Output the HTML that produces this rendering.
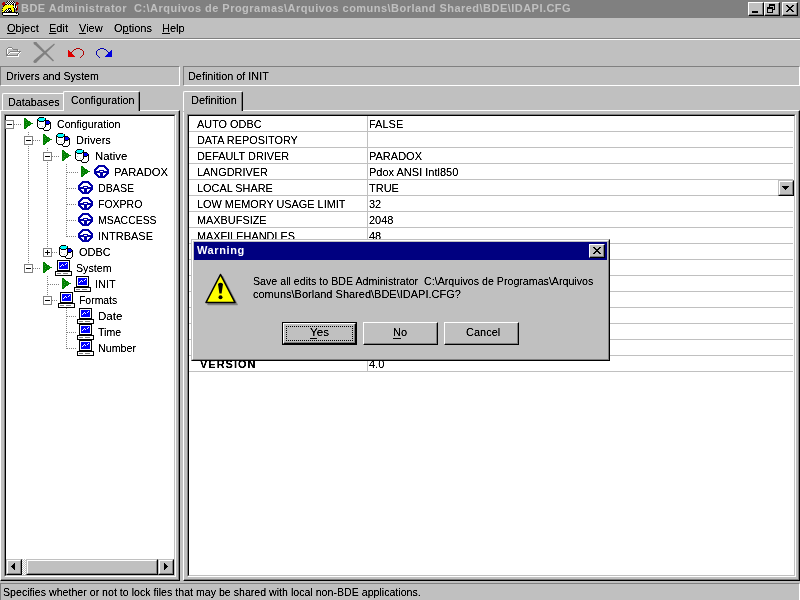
<!DOCTYPE html>
<html><head><meta charset="utf-8">
<style>
*{margin:0;padding:0;box-sizing:border-box}
html,body{width:800px;height:600px;overflow:hidden;background:#c0c0c0;font-family:"Liberation Sans",sans-serif;font-size:11px;color:#000}
.a{position:absolute}
.t{position:absolute;white-space:nowrap;line-height:13px;transform-origin:0 0;filter:url(#crisp)}
.u{text-decoration:underline;text-underline-offset:1px}
.u2{text-decoration:underline;text-underline-offset:2px}
.dl{position:absolute;background-image:linear-gradient(90deg,#808080 50%,transparent 50%);background-size:2px 1px;height:1px}
.dv{position:absolute;background-image:linear-gradient(180deg,#808080 50%,transparent 50%);background-size:1px 2px;width:1px}
</style></head><body>
<div id="root" class="a" style="left:0;top:0;width:800px;height:600px;background:#c0c0c0;will-change:transform;overflow:hidden">
<svg width="0" height="0" style="position:absolute"><defs><filter id="crisp"><feComponentTransfer><feFuncA type="linear" slope="1.8" intercept="-0.25"/></feComponentTransfer></filter><g id="i_db"><rect x="3" y="1" width="5" height="1" fill="#000"/><rect x="2" y="2" width="1" height="1" fill="#000"/><rect x="3" y="2" width="6" height="1" fill="#00ffff"/><rect x="9" y="2" width="1" height="1" fill="#000"/><rect x="1" y="3" width="1" height="1" fill="#000"/><rect x="2" y="3" width="7" height="1" fill="#00ffff"/><rect x="9" y="3" width="1" height="1" fill="#000"/><rect x="1" y="4" width="2" height="1" fill="#000"/><rect x="3" y="4" width="5" height="1" fill="#00ffff"/><rect x="8" y="4" width="5" height="1" fill="#000"/><rect x="1" y="5" width="1" height="1" fill="#000"/><rect x="2" y="5" width="1" height="1" fill="#fff"/><rect x="3" y="5" width="5" height="1" fill="#000"/><rect x="8" y="5" width="1" height="1" fill="#fff"/><rect x="9" y="5" width="1" height="1" fill="#000"/><rect x="10" y="5" width="3" height="1" fill="#0000ff"/><rect x="13" y="5" width="1" height="1" fill="#000"/><rect x="1" y="6" width="1" height="1" fill="#000"/><rect x="2" y="6" width="7" height="1" fill="#fff"/><rect x="9" y="6" width="1" height="1" fill="#000"/><rect x="10" y="6" width="4" height="1" fill="#0000ff"/><rect x="14" y="6" width="1" height="1" fill="#000"/><rect x="1" y="7" width="1" height="1" fill="#000"/><rect x="2" y="7" width="7" height="1" fill="#fff"/><rect x="9" y="7" width="1" height="1" fill="#000"/><rect x="10" y="7" width="3" height="1" fill="#0000ff"/><rect x="13" y="7" width="2" height="1" fill="#000"/><rect x="1" y="8" width="1" height="1" fill="#000"/><rect x="2" y="8" width="1" height="1" fill="#fff"/><rect x="3" y="8" width="1" height="1" fill="#c0c0c0"/><rect x="4" y="8" width="5" height="1" fill="#fff"/><rect x="9" y="8" width="4" height="1" fill="#000"/><rect x="13" y="8" width="1" height="1" fill="#fff"/><rect x="14" y="8" width="1" height="1" fill="#000"/><rect x="1" y="9" width="1" height="1" fill="#000"/><rect x="2" y="9" width="7" height="1" fill="#fff"/><rect x="9" y="9" width="1" height="1" fill="#000"/><rect x="10" y="9" width="4" height="1" fill="#fff"/><rect x="14" y="9" width="1" height="1" fill="#000"/><rect x="1" y="10" width="1" height="1" fill="#000"/><rect x="2" y="10" width="4" height="1" fill="#fff"/><rect x="6" y="10" width="1" height="1" fill="#c0c0c0"/><rect x="7" y="10" width="2" height="1" fill="#fff"/><rect x="9" y="10" width="1" height="1" fill="#000"/><rect x="10" y="10" width="4" height="1" fill="#fff"/><rect x="14" y="10" width="1" height="1" fill="#000"/><rect x="2" y="11" width="1" height="1" fill="#000"/><rect x="3" y="11" width="5" height="1" fill="#fff"/><rect x="8" y="11" width="1" height="1" fill="#000"/><rect x="9" y="11" width="5" height="1" fill="#fff"/><rect x="14" y="11" width="1" height="1" fill="#000"/><rect x="3" y="12" width="5" height="1" fill="#000"/><rect x="8" y="12" width="6" height="1" fill="#fff"/><rect x="14" y="12" width="1" height="1" fill="#000"/><rect x="7" y="13" width="1" height="1" fill="#000"/><rect x="8" y="13" width="5" height="1" fill="#fff"/><rect x="13" y="13" width="1" height="1" fill="#000"/><rect x="8" y="14" width="5" height="1" fill="#000"/></g><g id="i_wheel"><rect x="5" y="1" width="7" height="1" fill="#0000a8"/><rect x="4" y="2" width="9" height="1" fill="#0000a8"/><rect x="3" y="3" width="3" height="1" fill="#0000a8"/><rect x="11" y="3" width="3" height="1" fill="#0000a8"/><rect x="2" y="4" width="3" height="1" fill="#0000a8"/><rect x="12" y="4" width="3" height="1" fill="#0000a8"/><rect x="1" y="5" width="3" height="1" fill="#0000a8"/><rect x="13" y="5" width="3" height="1" fill="#0000a8"/><rect x="1" y="6" width="2" height="1" fill="#0000a8"/><rect x="6" y="6" width="5" height="1" fill="#0000a8"/><rect x="14" y="6" width="2" height="1" fill="#0000a8"/><rect x="1" y="7" width="6" height="1" fill="#0000a8"/><rect x="7" y="7" width="3" height="1" fill="#fff"/><rect x="10" y="7" width="6" height="1" fill="#0000a8"/><rect x="1" y="8" width="15" height="1" fill="#0000a8"/><rect x="1" y="9" width="3" height="1" fill="#0000a8"/><rect x="7" y="9" width="3" height="1" fill="#0000a8"/><rect x="13" y="9" width="3" height="1" fill="#0000a8"/><rect x="2" y="10" width="3" height="1" fill="#0000a8"/><rect x="7" y="10" width="3" height="1" fill="#0000a8"/><rect x="12" y="10" width="3" height="1" fill="#0000a8"/><rect x="3" y="11" width="3" height="1" fill="#0000a8"/><rect x="7" y="11" width="3" height="1" fill="#0000a8"/><rect x="11" y="11" width="3" height="1" fill="#0000a8"/><rect x="4" y="12" width="9" height="1" fill="#0000a8"/><rect x="5" y="13" width="7" height="1" fill="#0000a8"/></g><g id="i_comp"><rect x="2" y="0" width="13" height="1" fill="#000"/><rect x="2" y="1" width="1" height="1" fill="#000"/><rect x="3" y="1" width="11" height="1" fill="#fff"/><rect x="14" y="1" width="1" height="1" fill="#000"/><rect x="2" y="2" width="1" height="1" fill="#000"/><rect x="3" y="2" width="1" height="1" fill="#fff"/><rect x="4" y="2" width="9" height="1" fill="#0000ff"/><rect x="13" y="2" width="1" height="1" fill="#fff"/><rect x="14" y="2" width="1" height="1" fill="#000"/><rect x="2" y="3" width="1" height="1" fill="#000"/><rect x="3" y="3" width="1" height="1" fill="#fff"/><rect x="4" y="3" width="7" height="1" fill="#0000ff"/><rect x="11" y="3" width="1" height="1" fill="#fff"/><rect x="12" y="3" width="1" height="1" fill="#0000ff"/><rect x="13" y="3" width="1" height="1" fill="#fff"/><rect x="14" y="3" width="1" height="1" fill="#000"/><rect x="2" y="4" width="1" height="1" fill="#000"/><rect x="3" y="4" width="1" height="1" fill="#fff"/><rect x="4" y="4" width="3" height="1" fill="#0000ff"/><rect x="7" y="4" width="1" height="1" fill="#fff"/><rect x="8" y="4" width="2" height="1" fill="#0000ff"/><rect x="10" y="4" width="1" height="1" fill="#fff"/><rect x="11" y="4" width="2" height="1" fill="#0000ff"/><rect x="13" y="4" width="1" height="1" fill="#fff"/><rect x="14" y="4" width="1" height="1" fill="#000"/><rect x="2" y="5" width="1" height="1" fill="#000"/><rect x="3" y="5" width="1" height="1" fill="#fff"/><rect x="4" y="5" width="2" height="1" fill="#0000ff"/><rect x="6" y="5" width="1" height="1" fill="#fff"/><rect x="7" y="5" width="1" height="1" fill="#0000ff"/><rect x="8" y="5" width="1" height="1" fill="#fff"/><rect x="9" y="5" width="4" height="1" fill="#0000ff"/><rect x="13" y="5" width="1" height="1" fill="#fff"/><rect x="14" y="5" width="1" height="1" fill="#000"/><rect x="2" y="6" width="1" height="1" fill="#000"/><rect x="3" y="6" width="1" height="1" fill="#fff"/><rect x="4" y="6" width="1" height="1" fill="#0000ff"/><rect x="5" y="6" width="1" height="1" fill="#fff"/><rect x="6" y="6" width="7" height="1" fill="#0000ff"/><rect x="13" y="6" width="1" height="1" fill="#fff"/><rect x="14" y="6" width="1" height="1" fill="#000"/><rect x="2" y="7" width="1" height="1" fill="#000"/><rect x="3" y="7" width="1" height="1" fill="#fff"/><rect x="4" y="7" width="9" height="1" fill="#0000ff"/><rect x="13" y="7" width="1" height="1" fill="#fff"/><rect x="14" y="7" width="1" height="1" fill="#000"/><rect x="2" y="8" width="1" height="1" fill="#000"/><rect x="3" y="8" width="1" height="1" fill="#fff"/><rect x="4" y="8" width="9" height="1" fill="#0000ff"/><rect x="13" y="8" width="1" height="1" fill="#fff"/><rect x="14" y="8" width="1" height="1" fill="#000"/><rect x="2" y="9" width="1" height="1" fill="#000"/><rect x="3" y="9" width="11" height="1" fill="#fff"/><rect x="14" y="9" width="1" height="1" fill="#000"/><rect x="2" y="10" width="13" height="1" fill="#000"/><rect x="0" y="11" width="17" height="1" fill="#000"/><rect x="0" y="12" width="1" height="1" fill="#000"/><rect x="1" y="12" width="15" height="1" fill="#fff"/><rect x="16" y="12" width="1" height="1" fill="#000"/><rect x="0" y="13" width="1" height="1" fill="#000"/><rect x="1" y="13" width="1" height="1" fill="#fff"/><rect x="2" y="13" width="4" height="1" fill="#808080"/><rect x="6" y="13" width="2" height="1" fill="#fff"/><rect x="8" y="13" width="5" height="1" fill="#808080"/><rect x="13" y="13" width="3" height="1" fill="#fff"/><rect x="16" y="13" width="1" height="1" fill="#000"/><rect x="0" y="14" width="1" height="1" fill="#000"/><rect x="1" y="14" width="15" height="1" fill="#fff"/><rect x="16" y="14" width="1" height="1" fill="#000"/><rect x="0" y="15" width="17" height="1" fill="#000"/></g><g id="i_tri"><rect x="0" y="0" width="2" height="1" fill="#008000"/><rect x="0" y="1" width="3" height="1" fill="#008000"/><rect x="0" y="2" width="1" height="1" fill="#008000"/><rect x="1" y="2" width="1" height="1" fill="#30a030"/><rect x="2" y="2" width="2" height="1" fill="#008000"/><rect x="0" y="3" width="6" height="1" fill="#008000"/><rect x="0" y="4" width="2" height="1" fill="#008000"/><rect x="2" y="4" width="1" height="1" fill="#30a030"/><rect x="3" y="4" width="4" height="1" fill="#008000"/><rect x="0" y="5" width="5" height="1" fill="#008000"/><rect x="5" y="5" width="1" height="1" fill="#30a030"/><rect x="6" y="5" width="3" height="1" fill="#008000"/><rect x="0" y="6" width="2" height="1" fill="#008000"/><rect x="2" y="6" width="1" height="1" fill="#30a030"/><rect x="3" y="6" width="4" height="1" fill="#008000"/><rect x="0" y="7" width="6" height="1" fill="#008000"/><rect x="0" y="8" width="1" height="1" fill="#008000"/><rect x="1" y="8" width="1" height="1" fill="#30a030"/><rect x="2" y="8" width="2" height="1" fill="#008000"/><rect x="0" y="9" width="3" height="1" fill="#008000"/><rect x="0" y="10" width="2" height="1" fill="#008000"/></g><g id="i_bde"><rect x="6" y="1" width="1" height="1" fill="#000"/><rect x="7" y="1" width="1" height="1" fill="#fff"/><rect x="8" y="1" width="1" height="1" fill="#000"/><rect x="9" y="1" width="1" height="1" fill="#fff"/><rect x="10" y="1" width="1" height="1" fill="#000"/><rect x="11" y="1" width="1" height="1" fill="#fff"/><rect x="12" y="1" width="1" height="1" fill="#000"/><rect x="2" y="2" width="2" height="1" fill="#b00000"/><rect x="5" y="2" width="1" height="1" fill="#000"/><rect x="6" y="2" width="1" height="1" fill="#fff"/><rect x="7" y="2" width="1" height="1" fill="#000"/><rect x="8" y="2" width="1" height="1" fill="#fff"/><rect x="9" y="2" width="1" height="1" fill="#000"/><rect x="10" y="2" width="1" height="1" fill="#fff"/><rect x="11" y="2" width="1" height="1" fill="#000"/><rect x="12" y="2" width="1" height="1" fill="#fff"/><rect x="13" y="2" width="1" height="1" fill="#000"/><rect x="15" y="2" width="2" height="1" fill="#b00000"/><rect x="1" y="3" width="3" height="1" fill="#b00000"/><rect x="5" y="3" width="1" height="1" fill="#fff"/><rect x="6" y="3" width="1" height="1" fill="#000"/><rect x="7" y="3" width="1" height="1" fill="#fff"/><rect x="8" y="3" width="1" height="1" fill="#000"/><rect x="9" y="3" width="1" height="1" fill="#fff"/><rect x="10" y="3" width="1" height="1" fill="#000"/><rect x="11" y="3" width="1" height="1" fill="#fff"/><rect x="12" y="3" width="1" height="1" fill="#000"/><rect x="13" y="3" width="1" height="1" fill="#fff"/><rect x="15" y="3" width="3" height="1" fill="#b00000"/><rect x="1" y="4" width="3" height="1" fill="#b00000"/><rect x="4" y="4" width="2" height="1" fill="#000"/><rect x="6" y="4" width="1" height="1" fill="#fff"/><rect x="7" y="4" width="1" height="1" fill="#000"/><rect x="8" y="4" width="1" height="1" fill="#fff"/><rect x="9" y="4" width="1" height="1" fill="#000"/><rect x="10" y="4" width="1" height="1" fill="#fff"/><rect x="11" y="4" width="2" height="1" fill="#000"/><rect x="13" y="4" width="1" height="1" fill="#fff"/><rect x="14" y="4" width="1" height="1" fill="#000"/><rect x="15" y="4" width="2" height="1" fill="#b00000"/><rect x="2" y="5" width="1" height="1" fill="#b00000"/><rect x="3" y="5" width="1" height="1" fill="#000"/><rect x="4" y="5" width="8" height="1" fill="#ffff00"/><rect x="12" y="5" width="1" height="1" fill="#000"/><rect x="13" y="5" width="1" height="1" fill="#fff"/><rect x="14" y="5" width="1" height="1" fill="#000"/><rect x="2" y="6" width="1" height="1" fill="#000"/><rect x="3" y="6" width="10" height="1" fill="#ffff00"/><rect x="13" y="6" width="1" height="1" fill="#fff"/><rect x="14" y="6" width="1" height="1" fill="#000"/><rect x="15" y="6" width="1" height="1" fill="#fff"/><rect x="16" y="6" width="1" height="1" fill="#b00000"/><rect x="2" y="7" width="10" height="1" fill="#ffff00"/><rect x="12" y="7" width="1" height="1" fill="#000"/><rect x="13" y="7" width="1" height="1" fill="#fff"/><rect x="14" y="7" width="1" height="1" fill="#000"/><rect x="15" y="7" width="1" height="1" fill="#fff"/><rect x="16" y="7" width="1" height="1" fill="#b00000"/><rect x="1" y="8" width="1" height="1" fill="#000"/><rect x="2" y="8" width="5" height="1" fill="#ffff00"/><rect x="7" y="8" width="3" height="1" fill="#000"/><rect x="10" y="8" width="3" height="1" fill="#ffff00"/><rect x="13" y="8" width="1" height="1" fill="#000"/><rect x="14" y="8" width="1" height="1" fill="#fff"/><rect x="15" y="8" width="1" height="1" fill="#000"/><rect x="16" y="8" width="1" height="1" fill="#b00000"/><rect x="1" y="9" width="4" height="1" fill="#ffff00"/><rect x="5" y="9" width="1" height="1" fill="#000"/><rect x="6" y="9" width="1" height="1" fill="#fff"/><rect x="7" y="9" width="1" height="1" fill="#000"/><rect x="8" y="9" width="1" height="1" fill="#fff"/><rect x="9" y="9" width="1" height="1" fill="#000"/><rect x="10" y="9" width="3" height="1" fill="#ffff00"/><rect x="13" y="9" width="1" height="1" fill="#000"/><rect x="15" y="9" width="1" height="1" fill="#000"/><rect x="16" y="9" width="1" height="1" fill="#b00000"/><rect x="1" y="10" width="1" height="1" fill="#000"/><rect x="2" y="10" width="2" height="1" fill="#ffff00"/><rect x="4" y="10" width="1" height="1" fill="#000"/><rect x="5" y="10" width="1" height="1" fill="#fff"/><rect x="6" y="10" width="1" height="1" fill="#000"/><rect x="7" y="10" width="1" height="1" fill="#fff"/><rect x="8" y="10" width="1" height="1" fill="#000"/><rect x="9" y="10" width="1" height="1" fill="#fff"/><rect x="10" y="10" width="1" height="1" fill="#000"/><rect x="11" y="10" width="2" height="1" fill="#ffff00"/><rect x="13" y="10" width="1" height="1" fill="#000"/><rect x="15" y="10" width="1" height="1" fill="#b00000"/><rect x="1" y="11" width="2" height="1" fill="#ffff00"/><rect x="3" y="11" width="1" height="1" fill="#000"/><rect x="4" y="11" width="1" height="1" fill="#fff"/><rect x="5" y="11" width="1" height="1" fill="#000"/><rect x="6" y="11" width="1" height="1" fill="#fff"/><rect x="7" y="11" width="4" height="1" fill="#000"/><rect x="11" y="11" width="2" height="1" fill="#ffff00"/><rect x="13" y="11" width="1" height="1" fill="#000"/><rect x="1" y="12" width="16" height="1" fill="#000"/><rect x="1" y="13" width="1" height="1" fill="#000"/><rect x="2" y="13" width="13" height="1" fill="#fff"/><rect x="15" y="13" width="1" height="1" fill="#000"/><rect x="16" y="13" width="1" height="1" fill="#fff"/><rect x="17" y="13" width="1" height="1" fill="#000"/><rect x="1" y="14" width="1" height="1" fill="#000"/><rect x="2" y="14" width="15" height="1" fill="#fff"/><rect x="17" y="14" width="1" height="1" fill="#000"/><rect x="2" y="15" width="15" height="1" fill="#000"/></g><g id="i_folder"><rect x="2" y="0" width="4" height="1" fill="#808080"/><rect x="1" y="1" width="1" height="1" fill="#808080"/><rect x="2" y="1" width="4" height="1" fill="#fff"/><rect x="6" y="1" width="1" height="1" fill="#808080"/><rect x="0" y="2" width="1" height="1" fill="#808080"/><rect x="1" y="2" width="1" height="1" fill="#fff"/><rect x="7" y="2" width="5" height="1" fill="#808080"/><rect x="0" y="3" width="1" height="1" fill="#808080"/><rect x="1" y="3" width="1" height="1" fill="#fff"/><rect x="11" y="3" width="1" height="1" fill="#808080"/><rect x="12" y="3" width="1" height="1" fill="#fff"/><rect x="0" y="4" width="1" height="1" fill="#808080"/><rect x="1" y="4" width="1" height="1" fill="#fff"/><rect x="4" y="4" width="11" height="1" fill="#808080"/><rect x="0" y="5" width="1" height="1" fill="#808080"/><rect x="1" y="5" width="1" height="1" fill="#fff"/><rect x="3" y="5" width="1" height="1" fill="#808080"/><rect x="4" y="5" width="9" height="1" fill="#fff"/><rect x="13" y="5" width="1" height="1" fill="#808080"/><rect x="14" y="5" width="1" height="1" fill="#fff"/><rect x="0" y="6" width="1" height="1" fill="#808080"/><rect x="1" y="6" width="1" height="1" fill="#fff"/><rect x="2" y="6" width="1" height="1" fill="#808080"/><rect x="3" y="6" width="1" height="1" fill="#fff"/><rect x="12" y="6" width="1" height="1" fill="#808080"/><rect x="13" y="6" width="1" height="1" fill="#fff"/><rect x="0" y="7" width="2" height="1" fill="#808080"/><rect x="2" y="7" width="1" height="1" fill="#fff"/><rect x="11" y="7" width="1" height="1" fill="#808080"/><rect x="12" y="7" width="1" height="1" fill="#fff"/><rect x="0" y="8" width="12" height="1" fill="#808080"/><rect x="12" y="8" width="1" height="1" fill="#fff"/><rect x="1" y="9" width="12" height="1" fill="#fff"/></g><g id="i_undo"><rect x="10" y="1" width="4" height="1" fill="#b00000"/><rect x="8" y="2" width="2" height="1" fill="#b00000"/><rect x="14" y="2" width="2" height="1" fill="#b00000"/><rect x="2" y="3" width="1" height="1" fill="#e00000"/><rect x="7" y="3" width="1" height="1" fill="#b00000"/><rect x="16" y="3" width="1" height="1" fill="#b00000"/><rect x="2" y="4" width="2" height="1" fill="#e00000"/><rect x="6" y="4" width="1" height="1" fill="#b00000"/><rect x="17" y="4" width="1" height="1" fill="#b00000"/><rect x="2" y="5" width="3" height="1" fill="#e00000"/><rect x="5" y="5" width="1" height="1" fill="#b00000"/><rect x="17" y="5" width="1" height="1" fill="#b00000"/><rect x="2" y="6" width="4" height="1" fill="#e00000"/><rect x="17" y="6" width="1" height="1" fill="#b00000"/><rect x="2" y="7" width="5" height="1" fill="#e00000"/><rect x="17" y="7" width="1" height="1" fill="#b00000"/><rect x="2" y="8" width="6" height="1" fill="#e00000"/><rect x="16" y="8" width="1" height="1" fill="#b00000"/><rect x="2" y="9" width="7" height="1" fill="#e00000"/><rect x="15" y="9" width="1" height="1" fill="#b00000"/><rect x="14" y="10" width="1" height="1" fill="#b00000"/></g><g id="i_redo"><rect x="5" y="1" width="4" height="1" fill="#0000b0"/><rect x="3" y="2" width="2" height="1" fill="#0000b0"/><rect x="9" y="2" width="2" height="1" fill="#0000b0"/><rect x="2" y="3" width="1" height="1" fill="#0000b0"/><rect x="11" y="3" width="1" height="1" fill="#0000b0"/><rect x="16" y="3" width="1" height="1" fill="#0000e0"/><rect x="1" y="4" width="1" height="1" fill="#0000b0"/><rect x="12" y="4" width="1" height="1" fill="#0000b0"/><rect x="15" y="4" width="2" height="1" fill="#0000e0"/><rect x="1" y="5" width="1" height="1" fill="#0000b0"/><rect x="13" y="5" width="1" height="1" fill="#0000b0"/><rect x="14" y="5" width="3" height="1" fill="#0000e0"/><rect x="1" y="6" width="1" height="1" fill="#0000b0"/><rect x="13" y="6" width="4" height="1" fill="#0000e0"/><rect x="1" y="7" width="1" height="1" fill="#0000b0"/><rect x="12" y="7" width="5" height="1" fill="#0000e0"/><rect x="2" y="8" width="1" height="1" fill="#0000b0"/><rect x="11" y="8" width="6" height="1" fill="#0000e0"/><rect x="3" y="9" width="1" height="1" fill="#0000b0"/><rect x="10" y="9" width="7" height="1" fill="#0000e0"/><rect x="4" y="10" width="1" height="1" fill="#0000b0"/></g></defs></svg>
<div class="a" style="left:0px;top:0px;width:800px;height:18px;background:#808080"></div>
<svg class="a" style="left:1px;top:0px" width="18" height="16" shape-rendering="crispEdges"><use href="#i_bde"/></svg>
<div class="t" style="left:21px;top:2px;color:#c0c0c0;font-weight:bold;letter-spacing:0.47px;filter:none">BDE Administrator&nbsp; C:\Arquivos de Programas\Arquivos comuns\Borland Shared\BDE\IDAPI.CFG</div>
<div class="a" style="left:748px;top:2px;width:16px;height:14px;background:#c0c0c0;border-top:1px solid #fff;border-left:1px solid #fff;border-right:1px solid #000;border-bottom:1px solid #000;"></div>
<div class="a" style="left:749px;top:3px;width:14px;height:12px;border-right:1px solid #808080;border-bottom:1px solid #808080"></div>
<div class="a" style="left:764px;top:2px;width:16px;height:14px;background:#c0c0c0;border-top:1px solid #fff;border-left:1px solid #fff;border-right:1px solid #000;border-bottom:1px solid #000;"></div>
<div class="a" style="left:765px;top:3px;width:14px;height:12px;border-right:1px solid #808080;border-bottom:1px solid #808080"></div>
<div class="a" style="left:782px;top:2px;width:16px;height:14px;background:#c0c0c0;border-top:1px solid #fff;border-left:1px solid #fff;border-right:1px solid #000;border-bottom:1px solid #000;"></div>
<div class="a" style="left:783px;top:3px;width:14px;height:12px;border-right:1px solid #808080;border-bottom:1px solid #808080"></div>
<div class="a" style="left:752px;top:11px;width:6px;height:2px;background:#000"></div>
<div class="a" style="left:769px;top:4px;width:6px;height:6px;border:1px solid #000;border-top-width:2px"></div>
<div class="a" style="left:767px;top:7px;width:6px;height:6px;border:1px solid #000;border-top-width:2px;background:#c0c0c0"></div>
<svg class="a" style="left:786px;top:5px" width="8" height="7" shape-rendering="crispEdges"><path d="M0 0h2v1h-2zM1 1h2v1h-2zM2 2h4v1h-4zM3 3h2v1h-2zM2 4h4v1h-4zM1 5h2v1h-2zM0 6h2v1h-2zM6 0h2v1h-2zM5 1h2v1h-2zM5 5h2v1h-2zM6 6h2v1h-2z" fill="#000"/></svg>
<div class="t" style="left:7px;top:22px;"><span class="u">O</span>bject</div>
<div class="t" style="left:49px;top:22px;"><span class="u">E</span>dit</div>
<div class="t" style="left:79px;top:22px;"><span class="u">V</span>iew</div>
<div class="t" style="left:114px;top:22px;">O<span class="u">p</span>tions</div>
<div class="t" style="left:162px;top:22px;"><span class="u">H</span>elp</div>
<div class="a" style="left:0px;top:38px;width:800px;height:1px;background:#808080"></div>
<div class="a" style="left:0px;top:39px;width:800px;height:1px;background:#fff"></div>
<svg class="a" style="left:6px;top:47px" width="16" height="10" shape-rendering="crispEdges"><use href="#i_folder"/></svg>
<svg class="a" style="left:33px;top:42px" width="24" height="22"><path d="M0.95 2.08 L19.98 19.54 L21.02 18.46 L3.05 -0.08 Z" fill="#808080"/><circle cx="2" cy="1" r="1.5" fill="#808080"/><path d="M3.07 20.69 L21.9 2.45 L21.1 1.55 L0.93 18.31 Z" fill="#808080"/><circle cx="2" cy="19.5" r="1.6" fill="#808080"/></svg>
<svg class="a" style="left:66px;top:47px" width="19" height="11" shape-rendering="crispEdges"><use href="#i_undo"/></svg>
<svg class="a" style="left:95px;top:47px" width="19" height="11" shape-rendering="crispEdges"><use href="#i_redo"/></svg>
<div class="a" style="left:0px;top:66px;width:180px;height:20px;border-top:1px solid #808080;border-left:1px solid #808080;border-right:1px solid #fff;border-bottom:1px solid #fff;"></div>
<div class="t" style="left:6px;top:70px;transform:scaleX(0.968)">Drivers and System</div>
<div class="a" style="left:183px;top:66px;width:617px;height:20px;border-top:1px solid #808080;border-left:1px solid #808080;border-right:1px solid #fff;border-bottom:1px solid #fff;"></div>
<div class="t" style="left:188px;top:70px;transform:scaleX(0.987)">Definition of INIT</div>
<div class="a" style="left:2px;top:93px;width:62px;height:17px;border-top:1px solid #fff;border-left:1px solid #fff;border-radius:2px 0 0 0"></div>
<div class="t" style="left:8px;top:96px;transform:scaleX(0.98)">Databases</div>
<div class="a" style="left:0px;top:110px;width:180px;height:471px;border-top:1px solid #fff;border-left:1px solid #fff;border-right:1px solid #000;border-bottom:1px solid #000;"></div>
<div class="a" style="left:1px;top:111px;width:178px;height:469px;border-right:1px solid #808080;border-bottom:1px solid #808080"></div>
<div class="a" style="left:63px;top:91px;width:77px;height:21px;background:#c0c0c0"></div>
<div class="a" style="left:63px;top:91px;width:77px;height:20px;border-top:1px solid #fff;border-left:1px solid #fff;border-right:1px solid #000;border-radius:2px 2px 0 0"></div>
<div class="a" style="left:138px;top:92px;width:1px;height:19px;background:#808080"></div>
<div class="t" style="left:71px;top:94px;transform:scaleX(0.97)">Configuration</div>
<div class="a" style="left:4px;top:114px;width:172px;height:463px;background:#fff;border-top:1px solid #808080;border-left:1px solid #808080;border-right:1px solid #fff;border-bottom:1px solid #fff;"></div>
<div class="a" style="left:5px;top:115px;width:170px;height:461px;border-top:1px solid #000;border-left:1px solid #000;border-right:1px solid #c0c0c0;border-bottom:1px solid #c0c0c0"></div>
<div class="dv" style="left:28px;top:132px;height:137px"></div>
<div class="dv" style="left:47px;top:148px;height:105px"></div>
<div class="dv" style="left:66px;top:164px;height:73px"></div>
<div class="dv" style="left:47px;top:276px;height:25px"></div>
<div class="dv" style="left:66px;top:308px;height:41px"></div>
<div class="dl" style="left:10px;top:124px;width:11px"></div>
<div class="a" style="left:5px;top:120px;width:9px;height:9px;background:#fff;border:1px solid #808080"></div>
<div class="a" style="left:7px;top:124px;width:5px;height:1px;background:#000"></div>
<svg class="a" style="left:24px;top:118px" width="9" height="11" shape-rendering="crispEdges"><use href="#i_tri"/></svg>
<svg class="a" style="left:36px;top:116px" width="16" height="16" shape-rendering="crispEdges"><use href="#i_db"/></svg>
<div class="t" style="left:57px;top:118px;transform:scaleX(0.968)">Configuration</div>
<div class="dl" style="left:29px;top:140px;width:11px"></div>
<div class="a" style="left:24px;top:136px;width:9px;height:9px;background:#fff;border:1px solid #808080"></div>
<div class="a" style="left:26px;top:140px;width:5px;height:1px;background:#000"></div>
<svg class="a" style="left:43px;top:134px" width="9" height="11" shape-rendering="crispEdges"><use href="#i_tri"/></svg>
<svg class="a" style="left:55px;top:132px" width="16" height="16" shape-rendering="crispEdges"><use href="#i_db"/></svg>
<div class="t" style="left:76px;top:134px;">Drivers</div>
<div class="dl" style="left:48px;top:156px;width:11px"></div>
<div class="a" style="left:43px;top:152px;width:9px;height:9px;background:#fff;border:1px solid #808080"></div>
<div class="a" style="left:45px;top:156px;width:5px;height:1px;background:#000"></div>
<svg class="a" style="left:62px;top:150px" width="9" height="11" shape-rendering="crispEdges"><use href="#i_tri"/></svg>
<svg class="a" style="left:74px;top:148px" width="16" height="16" shape-rendering="crispEdges"><use href="#i_db"/></svg>
<div class="t" style="left:95px;top:150px;transform:scaleX(1.034)">Native</div>
<div class="dl" style="left:67px;top:172px;width:11px"></div>
<svg class="a" style="left:81px;top:166px" width="9" height="11" shape-rendering="crispEdges"><use href="#i_tri"/></svg>
<svg class="a" style="left:93px;top:164px" width="16" height="16" shape-rendering="crispEdges"><use href="#i_wheel"/></svg>
<div class="t" style="left:114px;top:166px;transform:scaleX(1.02)">PARADOX</div>
<div class="dl" style="left:67px;top:188px;width:10px"></div>
<svg class="a" style="left:77px;top:180px" width="16" height="16" shape-rendering="crispEdges"><use href="#i_wheel"/></svg>
<div class="t" style="left:98px;top:182px;transform:scaleX(0.971)">DBASE</div>
<div class="dl" style="left:67px;top:204px;width:10px"></div>
<svg class="a" style="left:77px;top:196px" width="16" height="16" shape-rendering="crispEdges"><use href="#i_wheel"/></svg>
<div class="t" style="left:98px;top:198px;transform:scaleX(0.955)">FOXPRO</div>
<div class="dl" style="left:67px;top:220px;width:10px"></div>
<svg class="a" style="left:77px;top:212px" width="16" height="16" shape-rendering="crispEdges"><use href="#i_wheel"/></svg>
<div class="t" style="left:98px;top:214px;transform:scaleX(0.949)">MSACCESS</div>
<div class="dl" style="left:67px;top:236px;width:10px"></div>
<svg class="a" style="left:77px;top:228px" width="16" height="16" shape-rendering="crispEdges"><use href="#i_wheel"/></svg>
<div class="t" style="left:98px;top:230px;">INTRBASE</div>
<div class="dl" style="left:48px;top:252px;width:10px"></div>
<div class="a" style="left:43px;top:248px;width:9px;height:9px;background:#fff;border:1px solid #808080"></div>
<div class="a" style="left:45px;top:252px;width:5px;height:1px;background:#000"></div>
<div class="a" style="left:47px;top:250px;width:1px;height:5px;background:#000"></div>
<svg class="a" style="left:58px;top:244px" width="16" height="16" shape-rendering="crispEdges"><use href="#i_db"/></svg>
<div class="t" style="left:79px;top:246px;">ODBC</div>
<div class="dl" style="left:29px;top:268px;width:11px"></div>
<div class="a" style="left:24px;top:264px;width:9px;height:9px;background:#fff;border:1px solid #808080"></div>
<div class="a" style="left:26px;top:268px;width:5px;height:1px;background:#000"></div>
<svg class="a" style="left:43px;top:262px" width="9" height="11" shape-rendering="crispEdges"><use href="#i_tri"/></svg>
<svg class="a" style="left:55px;top:260px" width="17" height="16" shape-rendering="crispEdges"><use href="#i_comp"/></svg>
<div class="t" style="left:76px;top:262px;transform:scaleX(0.971)">System</div>
<div class="dl" style="left:48px;top:284px;width:11px"></div>
<svg class="a" style="left:62px;top:278px" width="9" height="11" shape-rendering="crispEdges"><use href="#i_tri"/></svg>
<svg class="a" style="left:74px;top:276px" width="17" height="16" shape-rendering="crispEdges"><use href="#i_comp"/></svg>
<div class="t" style="left:95px;top:278px;">INIT</div>
<div class="dl" style="left:48px;top:300px;width:10px"></div>
<div class="a" style="left:43px;top:296px;width:9px;height:9px;background:#fff;border:1px solid #808080"></div>
<div class="a" style="left:45px;top:300px;width:5px;height:1px;background:#000"></div>
<svg class="a" style="left:58px;top:292px" width="17" height="16" shape-rendering="crispEdges"><use href="#i_comp"/></svg>
<div class="t" style="left:79px;top:294px;transform:scaleX(0.947)">Formats</div>
<div class="dl" style="left:67px;top:316px;width:10px"></div>
<svg class="a" style="left:77px;top:308px" width="17" height="16" shape-rendering="crispEdges"><use href="#i_comp"/></svg>
<div class="t" style="left:98px;top:310px;transform:scaleX(1.048)">Date</div>
<div class="dl" style="left:67px;top:332px;width:10px"></div>
<svg class="a" style="left:77px;top:324px" width="17" height="16" shape-rendering="crispEdges"><use href="#i_comp"/></svg>
<div class="t" style="left:98px;top:326px;transform:scaleX(0.957)">Time</div>
<div class="dl" style="left:67px;top:348px;width:10px"></div>
<svg class="a" style="left:77px;top:340px" width="17" height="16" shape-rendering="crispEdges"><use href="#i_comp"/></svg>
<div class="t" style="left:98px;top:342px;transform:scaleX(0.973)">Number</div>
<div class="a" style="left:6px;top:559px;width:168px;height:16px;background:#c0c0c0"></div>
<div class="a" style="left:22px;top:559px;width:4px;height:16px;background-image:repeating-conic-gradient(#fff 0 25%,#c0c0c0 0 50%);background-size:2px 2px"></div>
<div class="a" style="left:6px;top:559px;width:16px;height:16px;background:#c0c0c0;border-top:1px solid #c0c0c0;border-left:1px solid #c0c0c0;border-right:1px solid #000;border-bottom:1px solid #000;"></div><div class="a" style="left:7px;top:560px;width:14px;height:14px;border-top:1px solid #fff;border-left:1px solid #fff;border-right:1px solid #808080;border-bottom:1px solid #808080"></div>
<svg class="a" style="left:11px;top:563px" width="4" height="7" shape-rendering="crispEdges"><path d="M3 0h1v7h-1zM2 1h1v5h-1zM1 2h1v3h-1zM0 3h1v1h-1z" fill="#000"/></svg>
<div class="a" style="left:26px;top:559px;width:132px;height:16px;background:#c0c0c0;border-top:1px solid #c0c0c0;border-left:1px solid #c0c0c0;border-right:1px solid #000;border-bottom:1px solid #000;"></div><div class="a" style="left:27px;top:560px;width:130px;height:14px;border-top:1px solid #fff;border-left:1px solid #fff;border-right:1px solid #808080;border-bottom:1px solid #808080"></div>
<div class="a" style="left:158px;top:559px;width:16px;height:16px;background:#c0c0c0;border-top:1px solid #c0c0c0;border-left:1px solid #c0c0c0;border-right:1px solid #000;border-bottom:1px solid #000;"></div><div class="a" style="left:159px;top:560px;width:14px;height:14px;border-top:1px solid #fff;border-left:1px solid #fff;border-right:1px solid #808080;border-bottom:1px solid #808080"></div>
<svg class="a" style="left:164px;top:563px" width="4" height="7" shape-rendering="crispEdges"><path d="M0 0h1v7h-1zM1 1h1v5h-1zM2 2h1v3h-1zM3 3h1v1h-1z" fill="#000"/></svg>
<div class="a" style="left:183px;top:110px;width:617px;height:471px;border-top:1px solid #fff;border-left:1px solid #fff;border-right:1px solid #000;border-bottom:1px solid #000;"></div>
<div class="a" style="left:184px;top:111px;width:615px;height:469px;border-right:1px solid #808080;border-bottom:1px solid #808080"></div>
<div class="a" style="left:183px;top:91px;width:60px;height:21px;background:#c0c0c0"></div>
<div class="a" style="left:183px;top:91px;width:60px;height:20px;border-top:1px solid #fff;border-left:1px solid #fff;border-right:1px solid #000;border-radius:2px 2px 0 0"></div>
<div class="a" style="left:241px;top:92px;width:1px;height:19px;background:#808080"></div>
<div class="t" style="left:191px;top:94px;">Definition</div>
<div class="a" style="left:187px;top:114px;width:609px;height:463px;background:#fff;border-top:1px solid #808080;border-left:1px solid #808080;border-right:1px solid #fff;border-bottom:1px solid #fff;"></div>
<div class="a" style="left:188px;top:115px;width:607px;height:461px;border-top:1px solid #000;border-left:1px solid #000;border-right:1px solid #c0c0c0;border-bottom:1px solid #c0c0c0"></div>
<div class="a" style="left:189px;top:131px;width:604px;height:1px;background:#c0c0c0"></div>
<div class="t" style="left:197px;top:118px;transform:scaleX(0.99)">AUTO ODBC</div>
<div class="t" style="left:369px;top:118px;">FALSE</div>
<div class="a" style="left:189px;top:147px;width:604px;height:1px;background:#c0c0c0"></div>
<div class="t" style="left:197px;top:134px;transform:scaleX(0.99)">DATA REPOSITORY</div>
<div class="t" style="left:369px;top:134px;"></div>
<div class="a" style="left:189px;top:163px;width:604px;height:1px;background:#c0c0c0"></div>
<div class="t" style="left:197px;top:150px;transform:scaleX(0.99)">DEFAULT DRIVER</div>
<div class="t" style="left:369px;top:150px;">PARADOX</div>
<div class="a" style="left:189px;top:179px;width:604px;height:1px;background:#c0c0c0"></div>
<div class="t" style="left:197px;top:166px;transform:scaleX(0.99)">LANGDRIVER</div>
<div class="t" style="left:369px;top:166px;">Pdox ANSI Intl850</div>
<div class="a" style="left:189px;top:195px;width:604px;height:1px;background:#c0c0c0"></div>
<div class="t" style="left:197px;top:182px;transform:scaleX(0.99)">LOCAL SHARE</div>
<div class="t" style="left:369px;top:182px;">TRUE</div>
<div class="a" style="left:189px;top:211px;width:604px;height:1px;background:#c0c0c0"></div>
<div class="t" style="left:197px;top:198px;transform:scaleX(0.99)">LOW MEMORY USAGE LIMIT</div>
<div class="t" style="left:369px;top:198px;">32</div>
<div class="a" style="left:189px;top:227px;width:604px;height:1px;background:#c0c0c0"></div>
<div class="t" style="left:197px;top:214px;transform:scaleX(0.99)">MAXBUFSIZE</div>
<div class="t" style="left:369px;top:214px;">2048</div>
<div class="a" style="left:189px;top:243px;width:604px;height:1px;background:#c0c0c0"></div>
<div class="t" style="left:197px;top:230px;transform:scaleX(0.99)">MAXFILEHANDLES</div>
<div class="t" style="left:369px;top:230px;">48</div>
<div class="a" style="left:189px;top:259px;width:604px;height:1px;background:#c0c0c0"></div>
<div class="t" style="left:197px;top:246px;transform:scaleX(0.99)">MEMSIZE</div>
<div class="t" style="left:369px;top:246px;">16</div>
<div class="a" style="left:189px;top:275px;width:604px;height:1px;background:#c0c0c0"></div>
<div class="t" style="left:197px;top:262px;transform:scaleX(0.99)">MINBUFSIZE</div>
<div class="t" style="left:369px;top:262px;">128</div>
<div class="a" style="left:189px;top:291px;width:604px;height:1px;background:#c0c0c0"></div>
<div class="t" style="left:197px;top:278px;transform:scaleX(0.99)">MTS POOLING</div>
<div class="t" style="left:369px;top:278px;">FALSE</div>
<div class="a" style="left:189px;top:307px;width:604px;height:1px;background:#c0c0c0"></div>
<div class="t" style="left:197px;top:294px;transform:scaleX(0.99)">SHAREDMEMLOCATION</div>
<div class="t" style="left:369px;top:294px;"></div>
<div class="a" style="left:189px;top:323px;width:604px;height:1px;background:#c0c0c0"></div>
<div class="t" style="left:197px;top:310px;transform:scaleX(0.99)">SHAREDMEMSIZE</div>
<div class="t" style="left:369px;top:310px;">2048</div>
<div class="a" style="left:189px;top:339px;width:604px;height:1px;background:#c0c0c0"></div>
<div class="t" style="left:197px;top:326px;transform:scaleX(0.99)">SQLQRYMODE</div>
<div class="t" style="left:369px;top:326px;"></div>
<div class="a" style="left:189px;top:355px;width:604px;height:1px;background:#c0c0c0"></div>
<div class="t" style="left:197px;top:342px;transform:scaleX(0.99)">SYSFLAGS</div>
<div class="t" style="left:369px;top:342px;">0</div>
<div class="a" style="left:189px;top:371px;width:604px;height:1px;background:#c0c0c0"></div>
<div class="t" style="left:200px;top:358px;font-weight:bold;letter-spacing:1px">VERSION</div>
<div class="t" style="left:369px;top:358px;">4.0</div>
<div class="a" style="left:367px;top:116px;width:1px;height:255px;background:#c0c0c0"></div>
<div class="a" style="left:778px;top:180px;width:16px;height:16px;background:#c0c0c0;border-top:1px solid #c0c0c0;border-left:1px solid #c0c0c0;border-right:1px solid #000;border-bottom:1px solid #000;"></div><div class="a" style="left:779px;top:181px;width:14px;height:14px;border-top:1px solid #fff;border-left:1px solid #fff;border-right:1px solid #808080;border-bottom:1px solid #808080"></div>
<svg class="a" style="left:782px;top:186px" width="7" height="4" shape-rendering="crispEdges"><path d="M0 0h7v1h-7zM1 1h5v1h-5zM2 2h3v1h-3zM3 3h1v1h-1z" fill="#000"/></svg>
<div class="a" style="left:0;top:583px;width:800px;height:17px;border-top:1px solid #808080;border-left:1px solid #808080;border-right:1px solid #fff"></div>
<div class="t" style="left:3px;top:586px;transform:scaleX(0.965)">Specifies whether or not to lock files that may be shared with local non-BDE applications.</div>
<div class="a" style="left:191px;top:239px;width:419px;height:122px;background:#c0c0c0;border-top:1px solid #c0c0c0;border-left:1px solid #c0c0c0;border-right:1px solid #000;border-bottom:1px solid #000;"></div>
<div class="a" style="left:192px;top:240px;width:417px;height:120px;border-top:1px solid #fff;border-left:1px solid #fff;border-right:1px solid #808080;border-bottom:1px solid #808080"></div>
<div class="a" style="left:194px;top:242px;width:413px;height:18px;background:#000080"></div>
<div class="t" style="left:197px;top:244px;color:#fff;font-weight:bold;letter-spacing:0.6px;filter:none">Warning</div>
<div class="a" style="left:589px;top:244px;width:16px;height:14px;background:#c0c0c0;border-top:1px solid #fff;border-left:1px solid #fff;border-right:1px solid #000;border-bottom:1px solid #000;"></div>
<div class="a" style="left:590px;top:245px;width:14px;height:12px;border-right:1px solid #808080;border-bottom:1px solid #808080"></div>
<svg class="a" style="left:593px;top:247px" width="8" height="7" shape-rendering="crispEdges"><path d="M0 0h2v1h-2zM1 1h2v1h-2zM2 2h4v1h-4zM3 3h2v1h-2zM2 4h4v1h-4zM1 5h2v1h-2zM0 6h2v1h-2zM6 0h2v1h-2zM5 1h2v1h-2zM5 5h2v1h-2zM6 6h2v1h-2z" fill="#000"/></svg>
<svg class="a" style="left:204px;top:272px" width="36" height="36"><path d="M16.5 2.5 L31 30.5 L2 30.5 Z" fill="#808080" stroke="#808080" stroke-width="1.6" stroke-linejoin="round" transform="translate(2,2)"/><path d="M16.5 2.5 L31 30.5 L2 30.5 Z" fill="#ffff00" stroke="#000" stroke-width="1.6" stroke-linejoin="round"/><path d="M14 12 Q16.5 9.5 19 12 L17.6 21.5 L15.4 21.5 Z" fill="#000"/><circle cx="16.5" cy="25.2" r="2" fill="#000"/></svg>
<div class="t" style="left:253px;top:275px;transform:scaleX(0.968)">Save all edits to BDE Administrator&nbsp; C:\Arquivos de Programas\Arquivos</div>
<div class="t" style="left:253px;top:288px;">comuns\Borland Shared\BDE\IDAPI.CFG?</div>
<div class="a" style="left:282px;top:322px;width:75px;height:23px;background:#c0c0c0;border-top:1px solid #000;border-left:1px solid #000;border-right:1px solid #000;border-bottom:1px solid #000;"></div>
<div class="a" style="left:283px;top:323px;width:73px;height:21px;border-top:1px solid #fff;border-left:1px solid #fff;border-right:1px solid #000;border-bottom:1px solid #000"></div>
<div class="a" style="left:284px;top:324px;width:71px;height:19px;border-right:1px solid #808080;border-bottom:1px solid #808080"></div>
<div class="a" style="left:286px;top:326px;width:67px;height:15px;border:1px dotted #000"></div>
<div class="t" style="left:310px;top:326px;transform:scaleX(1.06)"><span class="u2">Y</span>es</div>
<div class="a" style="left:363px;top:322px;width:75px;height:23px;background:#c0c0c0;border-top:1px solid #fff;border-left:1px solid #fff;border-right:1px solid #000;border-bottom:1px solid #000;"></div>
<div class="a" style="left:364px;top:323px;width:73px;height:21px;border-right:1px solid #808080;border-bottom:1px solid #808080"></div>
<div class="a" style="left:444px;top:322px;width:75px;height:23px;background:#c0c0c0;border-top:1px solid #fff;border-left:1px solid #fff;border-right:1px solid #000;border-bottom:1px solid #000;"></div>
<div class="a" style="left:445px;top:323px;width:73px;height:21px;border-right:1px solid #808080;border-bottom:1px solid #808080"></div>
<div class="t" style="left:393px;top:326px;"><span class="u2">N</span>o</div>
<div class="t" style="left:466px;top:326px;">Cancel</div>
</div></body></html>
